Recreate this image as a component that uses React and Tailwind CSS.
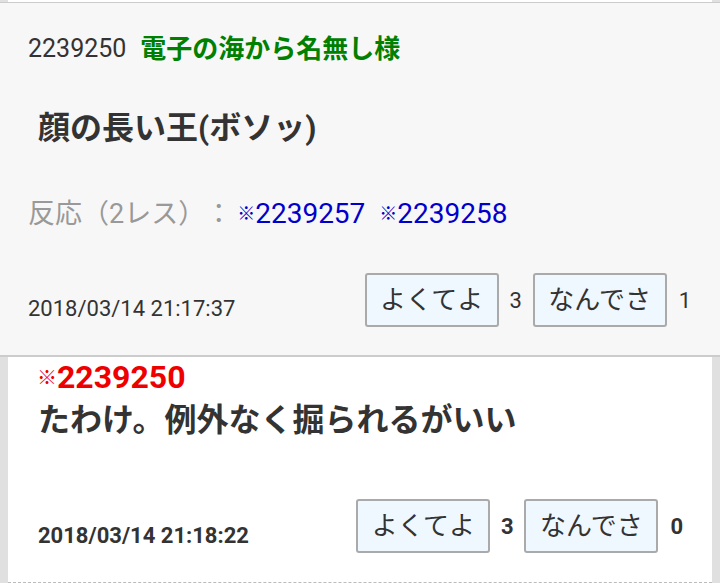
import React from "react";

const font = { fontFamily: "Roboto, 'Noto Sans CJK JP', sans-serif" };

function VoteButtons({ counts, bold }) {
  return (
    <div className="flex items-center">
      <button className="w-[134px] h-[54px] border-2 border-[#aaa] rounded-[3px] bg-[#f0f8ff] text-[26px] text-[#333] leading-none flex items-center justify-center">
        よくてよ
      </button>
      <span className={`w-[34px] text-center text-[22px] text-[#333] ${bold ? "font-bold" : ""}`}>
        {counts[0]}
      </span>
      <button className="w-[134px] h-[54px] border-2 border-[#aaa] rounded-[3px] bg-[#f0f8ff] text-[26px] text-[#333] leading-none flex items-center justify-center">
        なんでさ
      </button>
      <span className={`ml-[12px] text-[22px] text-[#333] ${bold ? "font-bold" : ""}`}>
        {counts[1]}
      </span>
    </div>
  );
}

function ResLink({ no, className }) {
  return (
    <a className={`text-[28px] text-[#0000cc] leading-none ${className}`}>
      <span className="text-[18px] font-bold align-[3px]">※</span>
      {no}
    </a>
  );
}

export default function App() {
  return (
    <div className="w-[720px] h-[583px] overflow-hidden bg-[#e0e0e0]" style={font}>
      {/* previous card edge */}
      <div className="h-[2px] mx-2 bg-white" />

      {/* Highlighted post */}
      <div className="bg-[#f7f7f7] border-t border-b-2 border-[#ccc] pl-[28px] pr-[29px] pt-[25px] pb-[28px]">
        <div className="h-[42px] flex items-center gap-[14px]">
          <span className="text-[25px] text-[#333]">2239250</span>
          <span className="text-[26px] font-bold text-[#008000]">電子の海から名無し様</span>
        </div>
        <div className="mt-[38px] h-[40px] pl-[10px] flex items-center">
          <span className="text-[32px] font-bold text-[#333] leading-none">顔の長い王(ボソッ)</span>
        </div>
        <div className="mt-[46px] h-[40px] flex items-center">
          <span className="text-[27px] text-[#999] leading-none [text-spacing-trim:space-all]">反応（2レス）：</span>
          <ResLink no="2239257" className="ml-[5px]" />
          <ResLink no="2239258" className="ml-[14px]" />
        </div>
        <div className="mt-[39px] h-[54px] flex items-end justify-between">
          <span className="text-[22px] text-[#333] leading-none pb-[7px]">2018/03/14 21:17:37</span>
          <VoteButtons counts={[3, 1]} />
        </div>
      </div>

      {/* Reply post */}
      <div className="mx-2 bg-white border-b border-dashed border-[#bbb] pl-[29px] pr-[29px] pt-[5px] pb-[29px]">
        <div className="h-[30px] flex items-center">
          <span className="text-[32px] font-bold text-[#ee0000] leading-none">
            <span className="text-[20px] align-[3px]">※</span>2239250
          </span>
        </div>
        <div className="mt-[8px] h-[40px] pl-[1px] flex items-center">
          <span className="text-[32px] font-bold text-[#333] leading-none">たわけ。例外なく掘られるがいい</span>
        </div>
        <div className="mt-[59px] h-[54px] pl-[1px] flex items-end justify-between">
          <span className="text-[22px] font-bold text-[#333] leading-none pb-[6px]">2018/03/14 21:18:22</span>
          <VoteButtons counts={[3, 0]} bold />
        </div>
      </div>
    </div>
  );
}
